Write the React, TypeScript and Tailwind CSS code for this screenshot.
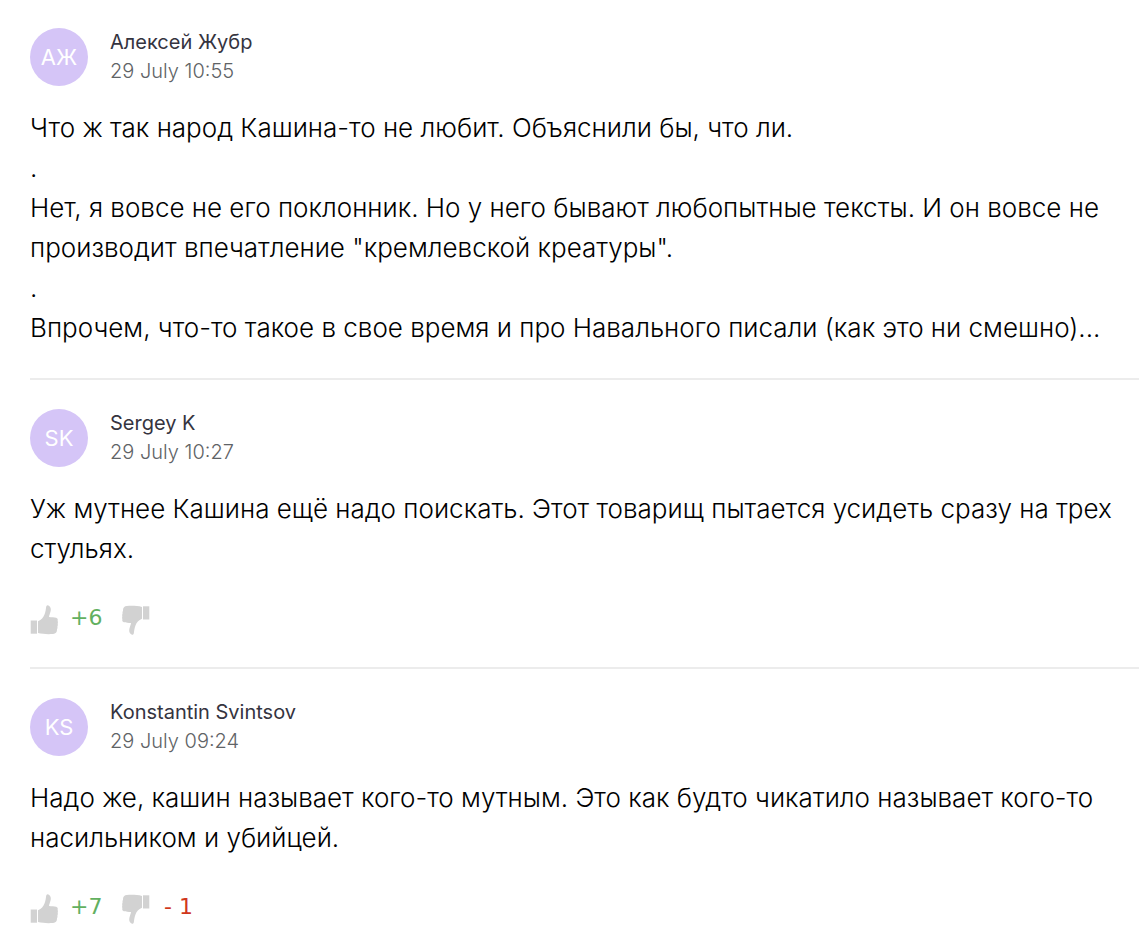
interface Comment {
  id: number;
  initials: string;
  author: string;
  date: string;
  lines: string[];
  votes?: { up: string; down?: string };
}

const comments: Comment[] = [
  {
    id: 1,
    initials: 'АЖ',
    author: 'Алексей Жубр',
    date: '29 July 10:55',
    lines: [
      'Что ж так народ Кашина-то не любит. Объяснили бы, что ли.',
      '.',
      'Нет, я вовсе не его поклонник. Но у него бывают любопытные тексты. И он вовсе не производит впечатление "кремлевской креатуры".',
      '.',
      'Впрочем, что-то такое в свое время и про Навального писали (как это ни смешно)...',
    ],
  },
  {
    id: 2,
    initials: 'SK',
    author: 'Sergey K',
    date: '29 July 10:27',
    lines: ['Уж мутнее Кашина ещё надо поискать. Этот товарищ пытается усидеть сразу на трех стульях.'],
    votes: { up: '+6' },
  },
  {
    id: 3,
    initials: 'KS',
    author: 'Konstantin Svintsov',
    date: '29 July 09:24',
    lines: ['Надо же, кашин называет кого-то мутным. Это как будто чикатило называет кого-то насильником и убийцей.'],
    votes: { up: '+7', down: '- 1' },
  },
];

function Thumb({ down = false }: { down?: boolean }) {
  return (
    <svg width="28" height="30" viewBox="0 0 28 30" fill="#d2d2d2" aria-hidden="true">
      <g transform={down ? 'rotate(180 14 15)' : undefined}>
        <path d="M.7 15.500h6.300v13.200H.7z" />
        <path d="M8 16.200c3.500-1.300 5.300-3.600 6.600-6.900.9-2.300 1.200-4.500 1.500-7C16.300.5 17.200-.1 18.400.4c2.500 1.200 2.800 3.900 2 6.500-.5 1.900-1.300 3.500-1.400 5 2.400.4 5.200.2 7.200.9 1.400.6 1.800 1.600 1.400 2.900.4.900.4 1.900.1 2.900.2 1 .2 2-.3 2.900.2 1 .1 2-.4 2.800.2 2.900-1.200 4.500-3.900 4.700-4.600.3-10.500.2-15.100-.9z" />
      </g>
    </svg>
  );
}

function CommentItem({ comment }: { comment: Comment }) {
  const { initials, author, date, lines, votes } = comment;
  return (
    <article className="border-b-2 border-[#ececec] pt-[29px] pb-[30px] first:pt-7 last:border-b-0">
      <header className="flex items-center gap-[22px]">
        <div className="flex size-[58px] items-center justify-center rounded-full bg-[#d5c5f7] text-[22px] text-white">
          {initials}
        </div>
        <div className="text-[20px] leading-[29px]">
          <h2 className="text-[#35343f]">{author}</h2>
          <time className="block font-light text-[#5f6366]">{date}</time>
        </div>
      </header>
      <div className="mt-[22px] pr-[20px] text-[26px] leading-[40px] font-light text-black">
        {lines.map((line, i) => (
          <p key={i}>{line}</p>
        ))}
      </div>
      {votes && (
        <div className="mt-9 flex h-8 items-start font-['DejaVu_Sans',sans-serif] text-[22px] leading-[26px]">
          <button type="button" aria-label="Like" className="mr-3">
            <Thumb />
          </button>
          <span className="w-[52px] text-[#62b05f]">{votes.up}</span>
          <button type="button" aria-label="Dislike" className="mr-3.5">
            <Thumb down />
          </button>
          {votes.down && <span className="text-[#d0361c]">{votes.down}</span>}
        </div>
      )}
    </article>
  );
}

export default function App() {
  return (
    <main className="bg-white pl-[30px] font-['Inter',sans-serif]">
      {comments.map((comment) => (
        <CommentItem key={comment.id} comment={comment} />
      ))}
    </main>
  );
}
